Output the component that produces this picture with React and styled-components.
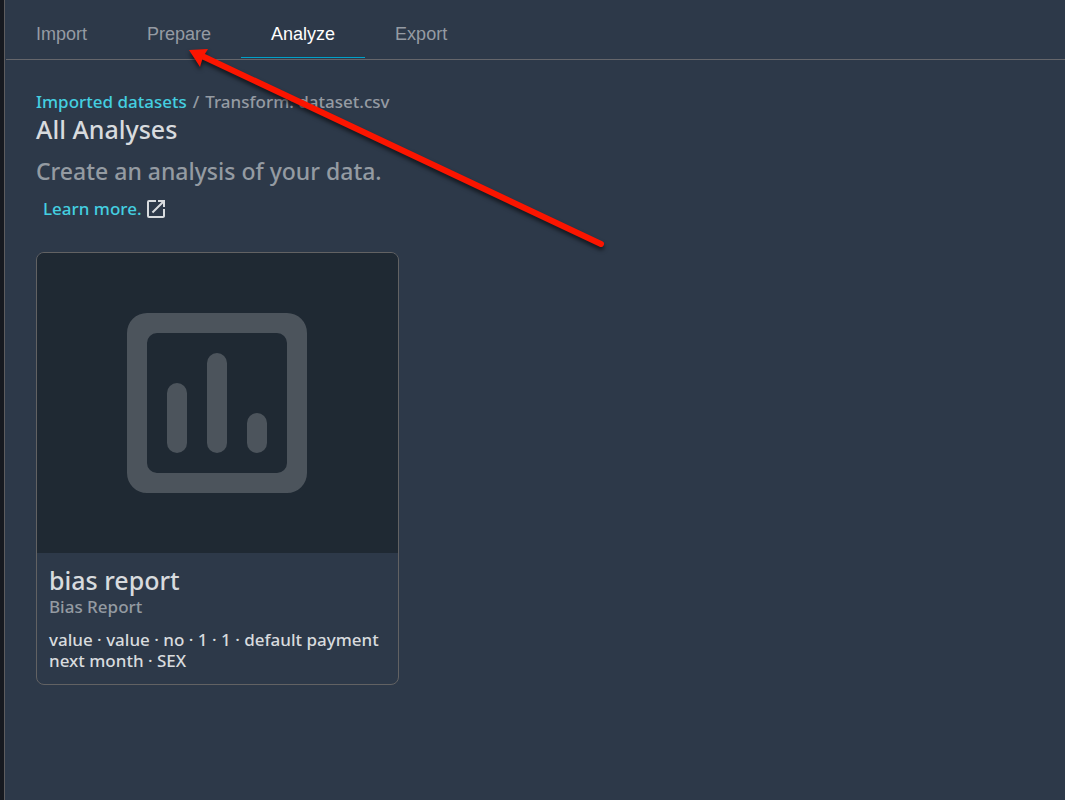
import React from "react";
import styled, { createGlobalStyle } from "styled-components";

const GlobalStyle = createGlobalStyle`
  * { box-sizing: border-box; }
  body {
    margin: 0;
    background: #2d3949;
    color: #d8dbde;
    font-family: "Noto Sans", "Open Sans", sans-serif;
    font-weight: 500;
  }
`;

const Page = styled.div`
  position: relative;
  min-height: 100vh;
  border-left: 4px solid #16191f;
`;

const Panel = styled.div`
  min-height: 100vh;
  border-left: 1px solid #5d5c5e;
`;

const Tabs = styled.nav`
  display: flex;
  height: 60px;
  margin-left: 1px;
  padding-bottom: 1px;
  border-bottom: 1px solid #65666b;
`;

const Tab = styled.button`
  padding: 10px 30px 0;
  border: 0;
  border-bottom: 1px solid ${(p) => (p.$active ? "#00a1c9" : "transparent")};
  background: none;
  color: ${(p) => (p.$active ? "#ffffff" : "#959ba3")};
  font: 18px/20px "Liberation Sans", Arial, sans-serif;
  cursor: pointer;
`;

const Content = styled.main`
  padding: 31px;
`;

const Breadcrumb = styled.nav`
  display: flex;
  gap: 6px;
  color: #959ba3;
  font-size: 17px;
  line-height: 22px;
`;

const Link = styled.a`
  color: #44cfe0;
  text-decoration: none;
`;

const Title = styled.h1`
  margin: 0;
  font-size: 25px;
  font-weight: 500;
  line-height: 32px;
`;

const Subtitle = styled.p`
  margin: 9px 0 0;
  color: #949ba2;
  font-size: 23px;
  line-height: 34px;
`;

const LearnMore = styled.div`
  display: flex;
  align-items: center;
  gap: 2px;
  margin-top: 9px;
  padding-left: 7px;
  font-size: 17px;
  line-height: 24px;
`;

const Card = styled.article`
  width: 100%;
  max-width: 363px;
  margin-top: 31px;
  overflow: hidden;
  border: 1px solid #626263;
  border-radius: 8px;
`;

const Preview = styled.div`
  display: flex;
  align-items: center;
  justify-content: center;
  height: 300px;
  padding-right: 1px;
  background: #1f2933;
`;

const CardBody = styled.div`
  padding: 11px 12px 13px;
`;

const CardTitle = styled.h2`
  margin: 0;
  font-size: 25px;
  font-weight: 500;
  line-height: 32px;
`;

const CardType = styled.div`
  color: #949ba2;
  font-size: 17px;
  line-height: 22px;
`;

const CardDetails = styled.p`
  margin: 11px 0 0;
  font-size: 17px;
  line-height: 21px;
`;

const Pointer = styled.svg`
  position: absolute;
  left: 180px;
  top: 40px;
  pointer-events: none;
  filter: drop-shadow(0 3px 2px rgba(0, 0, 0, 0.6));
`;

const tabs = ["Import", "Prepare", "Analyze", "Export"];

function ChartIcon() {
  return (
    <svg width="180" height="180" viewBox="0 0 180 180" fill="#4c545c" aria-hidden="true">
      <path
        fillRule="evenodd"
        d="M20 0H160A20 20 0 0 1 180 20V160A20 20 0 0 1 160 180H20A20 20 0 0 1 0 160V20A20 20 0 0 1 20 0ZM30 20A10 10 0 0 0 20 30V150A10 10 0 0 0 30 160H150A10 10 0 0 0 160 150V30A10 10 0 0 0 150 20Z"
      />
      <rect x="40" y="70" width="20" height="70" rx="10" />
      <rect x="80" y="40" width="20" height="100" rx="10" />
      <rect x="120" y="100" width="20" height="40" rx="10" />
    </svg>
  );
}

function ExternalIcon() {
  return (
    <svg width="24" height="24" viewBox="0 0 24 24" fill="#d8dbde" aria-hidden="true">
      <path d="M19 19H5V5h7V3H5a2 2 0 0 0-2 2v14a2 2 0 0 0 2 2h14c1.100 0 2-.9 2-2v-7h-2v7zM14 3v2h3.590l-9.830 9.830 1.410 1.410L19 6.410V10h2V3h-7z" />
    </svg>
  );
}

export default function App() {
  return (
    <Page>
      <GlobalStyle />
      <Panel>
        <Tabs>
          {tabs.map((name) => (
            <Tab key={name} type="button" $active={name === "Analyze"}>
              {name}
            </Tab>
          ))}
        </Tabs>
        <Content>
          <Breadcrumb aria-label="Breadcrumb">
            <Link href="#datasets">Imported datasets</Link>
            <span>/</span>
            <span>Transform: dataset.csv</span>
          </Breadcrumb>
          <Title>All Analyses</Title>
          <Subtitle>Create an analysis of your data.</Subtitle>
          <LearnMore>
            <Link href="#learn">Learn more.</Link>
            <ExternalIcon />
          </LearnMore>
          <Card>
            <Preview>
              <ChartIcon />
            </Preview>
            <CardBody>
              <CardTitle>bias report</CardTitle>
              <CardType>Bias Report</CardType>
              <CardDetails>value · value · no · 1 · 1 · default payment next month · SEX</CardDetails>
            </CardBody>
          </Card>
        </Content>
      </Panel>
      <Pointer width="436" height="220" viewBox="184 40 436 220" aria-hidden="true">
        <path d="M200 55L601 244" stroke="#fb1500" strokeWidth="6" strokeLinecap="round" />
        <path d="M189 50L208 49L203 57L200 67Z" fill="#fb1500" />
      </Pointer>
    </Page>
  );
}
